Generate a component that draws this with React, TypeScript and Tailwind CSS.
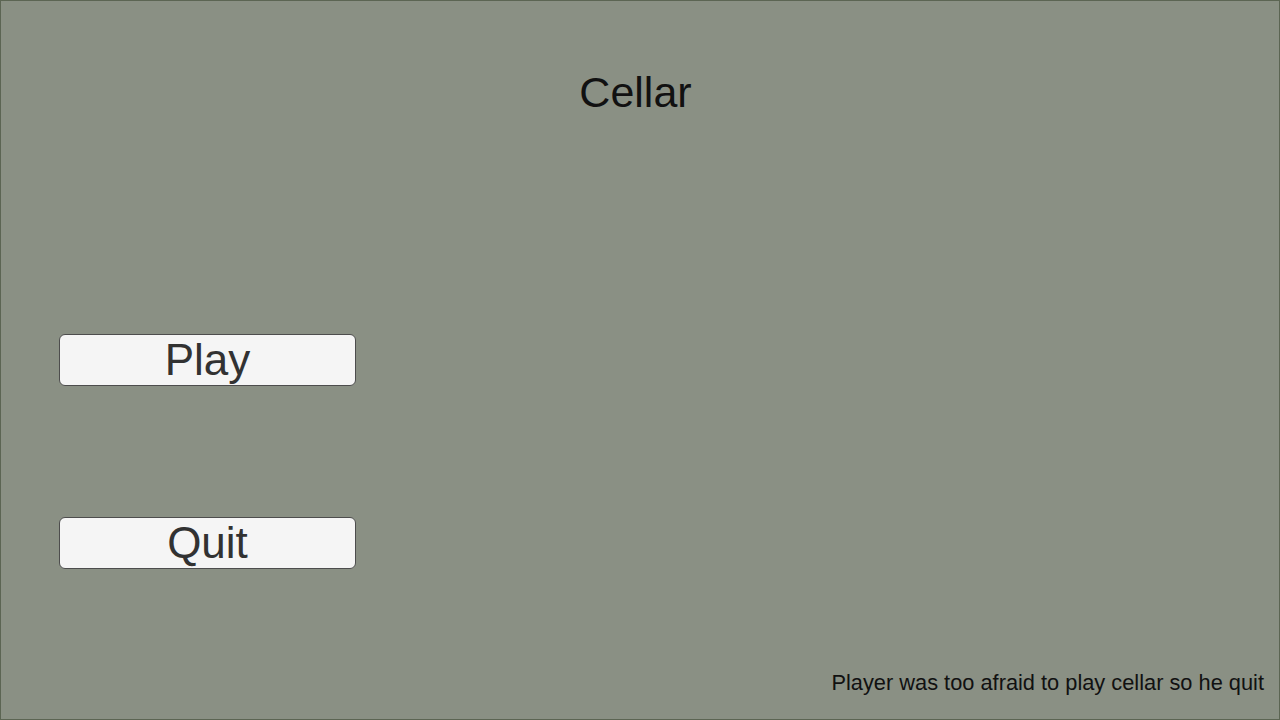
export default function App() {
  return (
    <div
      className="w-[1280px] h-[720px] border border-[#5c6553] bg-[#8a9084] flex flex-col overflow-hidden"
      style={{ fontFamily: '"Liberation Sans", Arial, sans-serif' }}
    >
      {/* Title */}
      <div className="pt-[70px] pr-[9px] flex justify-center">
        <h1 className="text-[43px] leading-none text-[#111111]">Cellar</h1>
      </div>

      {/* Menu buttons */}
      <div className="flex flex-col gap-[131px] mt-[220px] ml-[58px]">
        <button className="w-[297px] h-[52px] rounded-[6px] border border-[#4d4d4d] bg-[#f5f5f5] text-[44px] leading-none text-[#323232] flex items-center justify-center">
          Play
        </button>
        <button className="w-[297px] h-[52px] rounded-[6px] border border-[#4d4d4d] bg-[#f5f5f5] text-[44px] leading-none text-[#323232] flex items-center justify-center">
          Quit
        </button>
      </div>

      {/* Status */}
      <div className="mt-auto pb-[25px] pr-[15px] flex justify-end">
        <p className="text-[21.8px] leading-none text-[#111111]">Player was too afraid to play cellar so he quit</p>
      </div>
    </div>
  );
}
